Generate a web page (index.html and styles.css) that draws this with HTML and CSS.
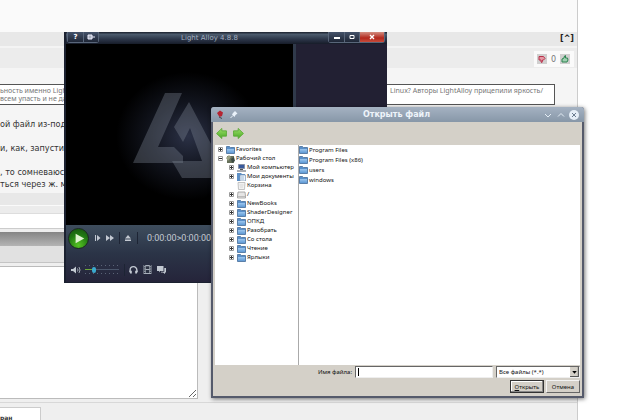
FILE: index.html
```html
<!DOCTYPE html>
<html lang="ru">
<head>
<meta charset="utf-8">
<title>Форум</title>
<link rel="stylesheet" href="styles.css">
</head>
<body>
<svg class="defs" aria-hidden="true">
  <defs>
    <linearGradient id="fold" x1="0" y1="0" x2="0" y2="1"><stop offset="0" stop-color="#9cc6ee"/><stop offset="1" stop-color="#5f99d4"/></linearGradient>
    <linearGradient id="leaf" x1="0" y1="0" x2="0" y2="1"><stop offset="0" stop-color="#9be066"/><stop offset="1" stop-color="#4aa826"/></linearGradient>
    <radialGradient id="glow"><stop offset="0" stop-color="#2b3146"/><stop offset=".5" stop-color="#12151f"/><stop offset="1" stop-color="#000"/></radialGradient>
    <symbol id="folder" viewBox="0 0 9 8"><path d="M.5 7.500V.5h3l1 1h4v6z" fill="#5a8fc8" stroke="#5b7fa8"/><path d="M1 7V3h7v4z" fill="url(#fold)"/></symbol>
    <symbol id="desk" viewBox="0 0 9 8"><path d="M1 1h7v7H1z" fill="#66705a"/><path d="M0 3l3-3 2 2-3 4z" fill="#9aa184"/><path d="M5 4l3-2 1 4-3 2z" fill="#3c4a44"/></symbol>
    <symbol id="computer" viewBox="0 0 9 8"><path d="M1.500.5h6v4h-6z" fill="#395a9c" stroke="#8791a5"/><path d="M0 6h9v2H0z" fill="#a9abb0"/><path d="M3 5h3v1H3z" fill="#555"/></symbol>
    <symbol id="docs" viewBox="0 0 9 8"><path d="M0 0h4l1 1h3v7H0z" fill="#5c8fc6"/><path d="M3 2h5.500v6H3z" fill="#eef4fa" stroke="#7794b4" stroke-width=".7"/><path d="M4 4h3M4 6h3" stroke="#7ba4cf" stroke-width=".7"/></symbol>
    <symbol id="bin" viewBox="0 0 9 8"><path d="M1 .5h7L7.500 7.500h-6z" fill="#f1f1f1" stroke="#b5b5b5" stroke-width=".8"/><path d="M2.500 3h4M3 5h3" stroke="#ccc" stroke-width=".7"/></symbol>
    <symbol id="drive" viewBox="0 0 9 8"><path d="M1 1h7l.5 4v2h-8V5z" fill="#e5e5e5" stroke="#999" stroke-width=".8"/><path d="M1 5.500h7" stroke="#aaa" stroke-width=".7"/></symbol>
    <symbol id="plus" viewBox="0 0 5 5"><path d="M.5.5h4v4h-4z" fill="#fff" stroke="#9a9a9a"/><path d="M1 2.500h3M2.500 1v3" stroke="#333"/></symbol>
    <symbol id="minus" viewBox="0 0 5 5"><path d="M.5.5h4v4h-4z" fill="#fff" stroke="#9a9a9a"/><path d="M1 2.500h3" stroke="#333"/></symbol>
    <symbol id="arrow" viewBox="0 0 10 10"><path d="M.5 5L5.300.4v2.200H9.500v4.800H5.300v2.200z" fill="url(#leaf)" stroke="#5aa836" stroke-width=".8"/></symbol>
  </defs>
</svg>

<main class="page">
  <header class="post-top"></header>
  <div class="post-bar"><a href="#top">[^]</a></div>
  <div class="post-meta">
    <div class="votes">
      <button class="vote" aria-label="Против"><svg viewBox="0 0 10 10"><path d="M2 2.500h4.500l1.500 2-1.500 1.500H5.500l-.5 2.500-1-.5V6H2z" fill="#e59aa5" stroke="#b8304a"/></svg></button>
      <span>0</span>
      <button class="vote" aria-label="За"><svg viewBox="0 0 10 10"><path d="M2 8h5l1-2-.5-2H5.500V1.500L4.500 2 4 4 2 5z" fill="#9fcfb0" stroke="#2c8450"/></svg></button>
    </div>
  </div>
  <article class="post">
    <blockquote class="quote">
      <p>ьность именно Ligh<br>всем упасть и не да</p>
      <p>Linux? Авторы LightAlloy прицепили яркость/</p>
    </blockquote>
    <p class="line">ой файл из-под</p>
    <p class="line">и, как, запустив</p>
    <p class="line tight">, то сомневаюсь</p>
    <p class="line tight">ться через ж. мо</p>
  </article>
  <div class="post-end"></div>
  <div class="gap"></div>
  <div class="strip"></div>
  <div class="form-head"></div>
  <div class="form-tools"></div>
  <div class="form-body"><textarea class="reply" aria-label="Сообщение"></textarea></div>
  <footer class="foot"><button class="tab">ран</button></footer>
</main>

<section class="player" aria-label="Light Alloy">
  <header class="player-title">
    <div class="caps">
      <button aria-label="Справка">?</button>
      <button aria-label="Закрепить"><svg viewBox="0 0 8 6"><path d="M1 1h4v4H1z" fill="#aab2bf" stroke="#eef"/><path d="M5 3h3" stroke="#eef"/></svg></button>
    </div>
    <h2>Light Alloy 4.8.8</h2>
    <div class="caps wide">
      <button aria-label="Свернуть"><svg viewBox="0 0 8 6"><path d="M1 4h6" stroke="#fff" stroke-width="2"/></svg></button>
      <button aria-label="Развернуть"><svg viewBox="0 0 8 6"><path d="M2 1.500h4v3H2z" fill="none" stroke="#fff"/></svg></button>
      <button class="shut" aria-label="Закрыть"><svg viewBox="0 0 8 6"><path d="M2 1l4 4M6 1L2 5" stroke="#fff" stroke-width="1.400"/></svg></button>
    </div>
  </header>
  <div class="stage">
    <div class="video">
      <svg viewBox="0 0 227 181" aria-hidden="true">
        <ellipse cx="122" cy="92" rx="72" ry="64" fill="url(#glow)"/>
        <path d="M99 49h17L92 103h16l9 9v7H67z" fill="#7d8494" fill-opacity=".36"/>
        <path d="M123 58l40 76h-47l-10-17h30l-12-33-7 14-9-15z" fill="#7d8494" fill-opacity=".36"/>
      </svg>
    </div>
    <div class="side"></div>
  </div>
  <div class="controls">
    <div class="row">
      <button class="play" aria-label="Играть"><svg viewBox="0 0 20 20"><path d="M7 5l9 5-9 5z" fill="#dff2cf"/></svg></button>
      <button class="ico" aria-label="Кадр"><svg viewBox="0 0 8 8"><path d="M1.500 1v6" stroke="#c3c9d2"/><path d="M3 1l3.500 3L3 7z" fill="#c3c9d2"/></svg></button>
      <button class="ico" aria-label="Вперёд"><svg viewBox="0 0 8 8"><path d="M0 1l4 3-4 3zM4 1l4 3-4 3z" fill="#c3c9d2"/></svg></button>
      <i></i>
      <button class="ico" aria-label="Извлечь"><svg viewBox="0 0 8 8"><path d="M4 1l3 3.500H1zM1 5.500h6v1.500H1z" fill="#c3c9d2"/></svg></button>
      <i></i>
      <span class="time">0:00:00&gt;0:00:00</span>
    </div>
    <div class="row low">
      <svg class="spk" viewBox="0 0 10 8"><path d="M0 3h2l3-2.500v7L2 5H0z" fill="#c3c9d2"/><path d="M6.500 2.500q1 1.500 0 3M8 1q2 3 0 6" fill="none" stroke="#c3c9d2" stroke-width=".8"/></svg>
      <input class="vol" type="range" min="0" max="100" value="24" aria-label="Громкость">
      <i></i>
      <button class="ico" aria-label="Звук"><svg viewBox="0 0 8 8"><path d="M1 6V4.500a3 3 0 0 1 6 0V6" fill="none" stroke="#c3c9d2" stroke-width="1.200"/><path d="M0 5h2.500v2.500H1zM8 5H5.500v2.500H7z" fill="#c3c9d2"/></svg></button>
      <button class="ico" aria-label="Видео"><svg viewBox="0 0 8 8"><path d="M.5 0h7v8h-7z" fill="#a9b0bb"/><path d="M2.500 1h3v2.500h-3zM2.500 4.500h3V7h-3z" fill="#2c3243"/><path d="M1.500 0v8M6.500 0v8" stroke="#2c3243" stroke-dasharray="1"/></svg></button>
      <button class="ico" aria-label="Субтитры"><svg viewBox="0 0 9 8"><path d="M0 0h6.500v5H3L2 6.500V5H0z" fill="#c3c9d2"/><path d="M7.300 2H9v4.500H8V8L6 6.500H4V5.800h3.300z" fill="#c3c9d2"/></svg></button>
    </div>
  </div>
</section>

<section class="dialog" role="dialog" aria-label="Открыть файл">
  <header class="dialog-title">
    <svg class="pin" viewBox="0 0 8 9"><path d="M1 3l3-2.500 3 2L6 6 3.500 7z" fill="#b52431"/><path d="M3 7l3 1.500" stroke="#42464e"/></svg>
    <svg class="pin" viewBox="0 0 8 9"><path d="M3 3l2-2 2.500 2.500-2 1.500-1 2L2 4.500z" fill="#eaf2fa"/><path d="M3 5.500L.5 8" stroke="#eaf2fa"/></svg>
    <h2>Открыть файл</h2>
    <button aria-label="Свернуть"><svg viewBox="0 0 10 10"><path d="M2 4l3 3 3-3" fill="none" stroke="#e4edf5"/></svg></button>
    <button aria-label="Развернуть"><svg viewBox="0 0 10 10"><path d="M2 6.500l3-3 3 3" fill="none" stroke="#e4edf5"/></svg></button>
    <button aria-label="Закрыть"><svg viewBox="0 0 10 10"><circle cx="5" cy="5" r="5" fill="#e6eff8"/><path d="M3 3l4 4M7 3L3 7" stroke="#6b7d91"/></svg></button>
  </header>
  <div class="dialog-body">
    <nav class="tools">
      <button aria-label="Назад"><svg><use href="#arrow"/></svg></button>
      <button aria-label="Вперёд"><svg class="flip"><use href="#arrow"/></svg></button>
    </nav>
    <div class="panes">
      <ul class="tree">
        <li><svg class="exp"><use href="#plus"/></svg><svg class="fi"><use href="#folder"/></svg>Favorites</li>
        <li><svg class="exp"><use href="#minus"/></svg><svg class="fi"><use href="#desk"/></svg>Рабочий стол</li>
        <li class="sub"><svg class="exp"><use href="#plus"/></svg><svg class="fi"><use href="#computer"/></svg>Мой компьютер</li>
        <li class="sub"><svg class="exp"><use href="#plus"/></svg><svg class="fi"><use href="#docs"/></svg>Мои документы</li>
        <li class="sub"><svg class="exp"></svg><svg class="fi"><use href="#bin"/></svg>Корзина</li>
        <li class="sub"><svg class="exp"><use href="#plus"/></svg><svg class="fi"><use href="#drive"/></svg>/</li>
        <li class="sub"><svg class="exp"><use href="#plus"/></svg><svg class="fi"><use href="#folder"/></svg>NewBooks</li>
        <li class="sub"><svg class="exp"><use href="#plus"/></svg><svg class="fi"><use href="#folder"/></svg>ShaderDesigner</li>
        <li class="sub"><svg class="exp"><use href="#plus"/></svg><svg class="fi"><use href="#folder"/></svg>ОПКД</li>
        <li class="sub"><svg class="exp"><use href="#plus"/></svg><svg class="fi"><use href="#folder"/></svg>Разобрать</li>
        <li class="sub"><svg class="exp"><use href="#plus"/></svg><svg class="fi"><use href="#folder"/></svg>Со стола</li>
        <li class="sub"><svg class="exp"><use href="#plus"/></svg><svg class="fi"><use href="#folder"/></svg>Чтение</li>
        <li class="sub"><svg class="exp"><use href="#plus"/></svg><svg class="fi"><use href="#folder"/></svg>Ярлыки</li>
      </ul>
      <ul class="files">
        <li><svg class="fi"><use href="#folder"/></svg>Program Files</li>
        <li><svg class="fi"><use href="#folder"/></svg>Program Files (x86)</li>
        <li><svg class="fi"><use href="#folder"/></svg>users</li>
        <li><svg class="fi"><use href="#folder"/></svg>windows</li>
      </ul>
    </div>
    <form class="pick">
      <div class="fields">
        <label for="name">Имя файла:</label>
        <div class="entry"><input id="name" type="text"><span class="caret"></span></div>
        <div class="combo">
          <select aria-label="Тип файлов"><option>Все файлы (*.*)</option></select>
          <svg viewBox="0 0 8 9"><path d="M0 0h8v9H0z" fill="#d4d0c8"/><path d="M7.500 0v8.500H0" fill="none" stroke="#555"/><path d="M2 3.500h4L4 6z" fill="#000"/></svg>
        </div>
      </div>
      <div class="actions">
        <button type="button" class="main"><u>О</u>ткрыть</button>
        <button type="button">Отмена</button>
      </div>
    </form>
  </div>
</section>
</body>
</html>
```

FILE: styles.css
```css
* { box-sizing: border-box; }
body {
  margin: 0;
  position: relative;
  min-height: 100vh;
  overflow: hidden;
  background: #fff;
  color: #333;
  font-family: "DejaVu Sans", Verdana, sans-serif;
  font-size: 8px;
}
p, h2, ul, blockquote { margin: 0; padding: 0; }
ul { list-style: none; }
button { padding: 0; border: 0; background: none; color: inherit; font: inherit; }
svg { display: block; }
.defs { position: absolute; width: 0; height: 0; }

/* forum page */
.page {
  display: flex;
  flex-direction: column;
  min-height: 100vh;
  margin-right: 62px;
  border-right: 1px solid #ccc;
  background: #efefef;
}
.post-top { height: 32px; background: #fafafa; }
.post-bar {
  display: flex;
  justify-content: flex-end;
  height: 14px;
  padding-right: 3px;
  background: #e8e8e8;
  line-height: 14px;
}
.post-bar a { color: #222; font-weight: bold; text-decoration: none; }
.post-meta {
  display: flex;
  justify-content: flex-end;
  height: 22px;
  padding: 3px 3px 0;
  border-top: 2px solid #f4f4f4;
  background: #ececec;
}
.votes {
  display: flex;
  align-items: center;
  justify-content: space-between;
  width: 40px;
  height: 16px;
  padding: 0 4px 0 3px;
  background: #fafafa;
  color: #777;
}
.vote { width: 10px; height: 10px; background: #d0cfcf; }
.post { height: 125px; padding-top: 16px; background: #f5f5f5; }
.quote {
  display: flex;
  justify-content: space-between;
  height: 21px;
  margin: 0 22px 13px 0;
  padding: 2px 11px 0 0;
  border: 1px solid #555;
  border-left: 0;
  background: #fff;
  color: #777;
  font-family: "Noto Sans", "DejaVu Sans", sans-serif;
  font-size: 7px;
  line-height: 8px;
}
.line {
  margin-bottom: 12px;
  font-family: "DejaVu Sans Condensed", "DejaVu Sans", sans-serif;
  font-size: 9px;
  line-height: 12px;
  white-space: nowrap;
}
.line.tight { margin-bottom: 0; }
.post-end { height: 12px; background: #e8e8e8; }
.gap { height: 9px; border-top: 1px solid #fafafa; border-bottom: 1px solid #ddd; background: #ececec; }
.strip { height: 15px; border-bottom: 1px solid #ccc; background: #fff; }
.form-head { height: 17px; border-top: 3px solid #eee; background: linear-gradient(#858585, #b4b4b4); }
.form-tools { height: 17px; border-bottom: 1px solid #c4c4c4; background: #e1e1e1; }
.form-body { padding: 3px 0 3px; margin-right: 379px; }
.reply {
  display: block;
  width: 100%;
  height: 133px;
  border: 1px solid #bbb;
  border-left: 0;
  background: #fff;
}
.foot { flex: 1; padding-top: 4px; border-top: 1px solid #d8d8d8; }
.tab {
  width: 41px;
  height: 15px;
  padding-top: 4px;
  border: 1px solid #ccc;
  border-width: 1px 1px 0 0;
  background: #fff;
  font-size: 6px;
  font-weight: bold;
  text-align: left;
}

/* media player window */
.player {
  position: absolute;
  left: 64px;
  top: 32px;
  width: 323px;
  border: 1px solid #1b2130;
  border-width: 0 0 1px 2px;
  background: #232135;
}
.player-title {
  display: flex;
  justify-content: space-between;
  height: 12px;
  padding: 0 2px 0 1px;
  background: linear-gradient(#1a202c, #4b5a6c 20%, #2c3649 60%, #171c29);
}
.player-title h2 { padding-right: 8px; color: #a3afc0; font-size: 7px; font-weight: normal; line-height: 12px; }
.caps { display: flex; height: 11px; border: 1px solid #59667a; border-top: 0; border-radius: 0 0 3px 3px; }
.caps button { width: 15px; border-left: 1px solid #59667a; background: linear-gradient(#45536a, #1e2636); color: #fff; font-size: 7px; font-weight: bold; line-height: 10px; }
.caps button:first-child { border-left: 0; }
.caps svg { width: 8px; height: 6px; margin: auto; }
.caps .shut { width: 25px; background: linear-gradient(#d28d80, #b3271c 60%, #c84d3c); }
.stage { display: flex; height: 181px; }
.video { width: 227px; background: #000; }
.side { flex: 1; border-left: 3px solid #303a4b; background: #222033; }
.controls { height: 57px; background: linear-gradient(#3e4d5d, #2b3447 50%, #25243a); }
.row { display: flex; align-items: center; height: 26px; padding-left: 2px; color: #c3c9d2; }
.row i { width: 1px; height: 12px; background: #1d2434; }
.play { width: 21px; height: 21px; margin-right: 1px; border: 1px solid #1b2a20; border-radius: 50%; background: radial-gradient(circle at 50% 85%, #56c323, #217a12 55%, #17500f); }
.ico { width: 8px; height: 8px; margin-left: 4px; }
.ico + i { margin-left: 5px; }
.row i + .ico { margin-left: 4px; }
.time { margin-left: 9px; font-family: Roboto, sans-serif; font-size: 9px; }
.low { height: 30px; padding: 7px 0 0 5px; }
.spk { width: 10px; height: 8px; }
.vol {
  appearance: none;
  width: 34px;
  height: 9px;
  margin: 0 5px 0 4px;
  background:
    linear-gradient(90deg, #6fa83a 8px, #4b566b 8px) 0 50% / 100% 1px no-repeat,
    repeating-linear-gradient(90deg, #5a6376 0 1px, transparent 1px 4px) 0 0 / 100% 1px no-repeat,
    repeating-linear-gradient(90deg, #5a6376 0 1px, transparent 1px 4px) 0 100% / 100% 1px no-repeat;
}
.vol::-webkit-slider-thumb { appearance: none; width: 4px; height: 6px; border-radius: 2px; background: #3aa9cf; }
.low .ico { width: 9px; height: 9px; margin-left: 5px; }

/* file dialog */
.dialog {
  position: absolute;
  left: 211px;
  top: 107px;
  width: 373px;
  border: 2px solid #555a6b;
  border-top: 0;
  border-radius: 3px 3px 0 0;
  background: #d4d0c8;
  box-shadow: 1px 1px 4px #0008;
  color: #111;
  font-family: "Noto Sans", "DejaVu Sans", sans-serif;
  font-size: 6px;
}
.dialog-title {
  display: flex;
  align-items: center;
  gap: 3px;
  height: 15px;
  margin: 0 -2px;
  padding: 0 5px;
  border-radius: 3px 3px 0 0;
  background: linear-gradient(#a5b2c2, #8797a8);
}
.dialog-title h2 { flex: 1; padding-left: 9px; color: #eef4fa; font-family: "DejaVu Sans", sans-serif; font-size: 8px; text-align: center; }
.dialog-title button, .dialog-title button svg { width: 10px; height: 10px; }
.pin { width: 8px; height: 9px; margin-right: 3px; }
.dialog-body { padding: 0 2px 3px; }
.tools { display: flex; gap: 6px; height: 23px; padding: 5px 1px; }
.tools svg { width: 11px; height: 11px; }
.flip { transform: scaleX(-1); }
.panes { display: flex; height: 220px; background: #fff; }
.tree { width: 84px; padding-left: 3px; border-right: 1px solid #aaa; }
.files { flex: 1; }
.tree li, .files li { display: flex; align-items: center; height: 9px; line-height: 9px; white-space: nowrap; }
.files li { height: 10px; }
.tree .sub { padding-left: 11px; }
.exp { width: 5px; height: 5px; margin-right: 3px; }
.fi { width: 9px; height: 8px; margin-right: 1px; }
.pick { padding-top: 1px; }
.fields { display: flex; align-items: center; justify-content: flex-end; gap: 3px; }
.entry { position: relative; width: 138px; height: 12px; }
.entry input { display: block; width: 100%; height: 100%; padding: 0 2px; border: 1px solid #777; border-color: #666 #eee #eee #666; background: #fff; font: inherit; }
.caret { position: absolute; left: 3px; top: 2px; width: 1px; height: 8px; background: #000; }
.combo { position: relative; width: 84px; height: 12px; }
.combo select { appearance: none; display: block; width: 100%; height: 100%; padding: 0 2px; border: 1px solid #777; border-color: #666 #eee #eee #666; border-radius: 0; background: #fff; color: inherit; font: inherit; }
.combo svg { position: absolute; right: 1px; top: 1px; width: 9px; height: 10px; pointer-events: none; }
.actions { display: flex; justify-content: flex-end; gap: 2px; padding-top: 2px; }
.actions button { width: 34px; height: 13px; border: 1px solid #777; border-color: #f4f4f4 #666 #666 #f4f4f4; }
.actions .main { border: 1px solid #333; box-shadow: inset -1px -1px #888, inset 1px 1px #fff; }
```
